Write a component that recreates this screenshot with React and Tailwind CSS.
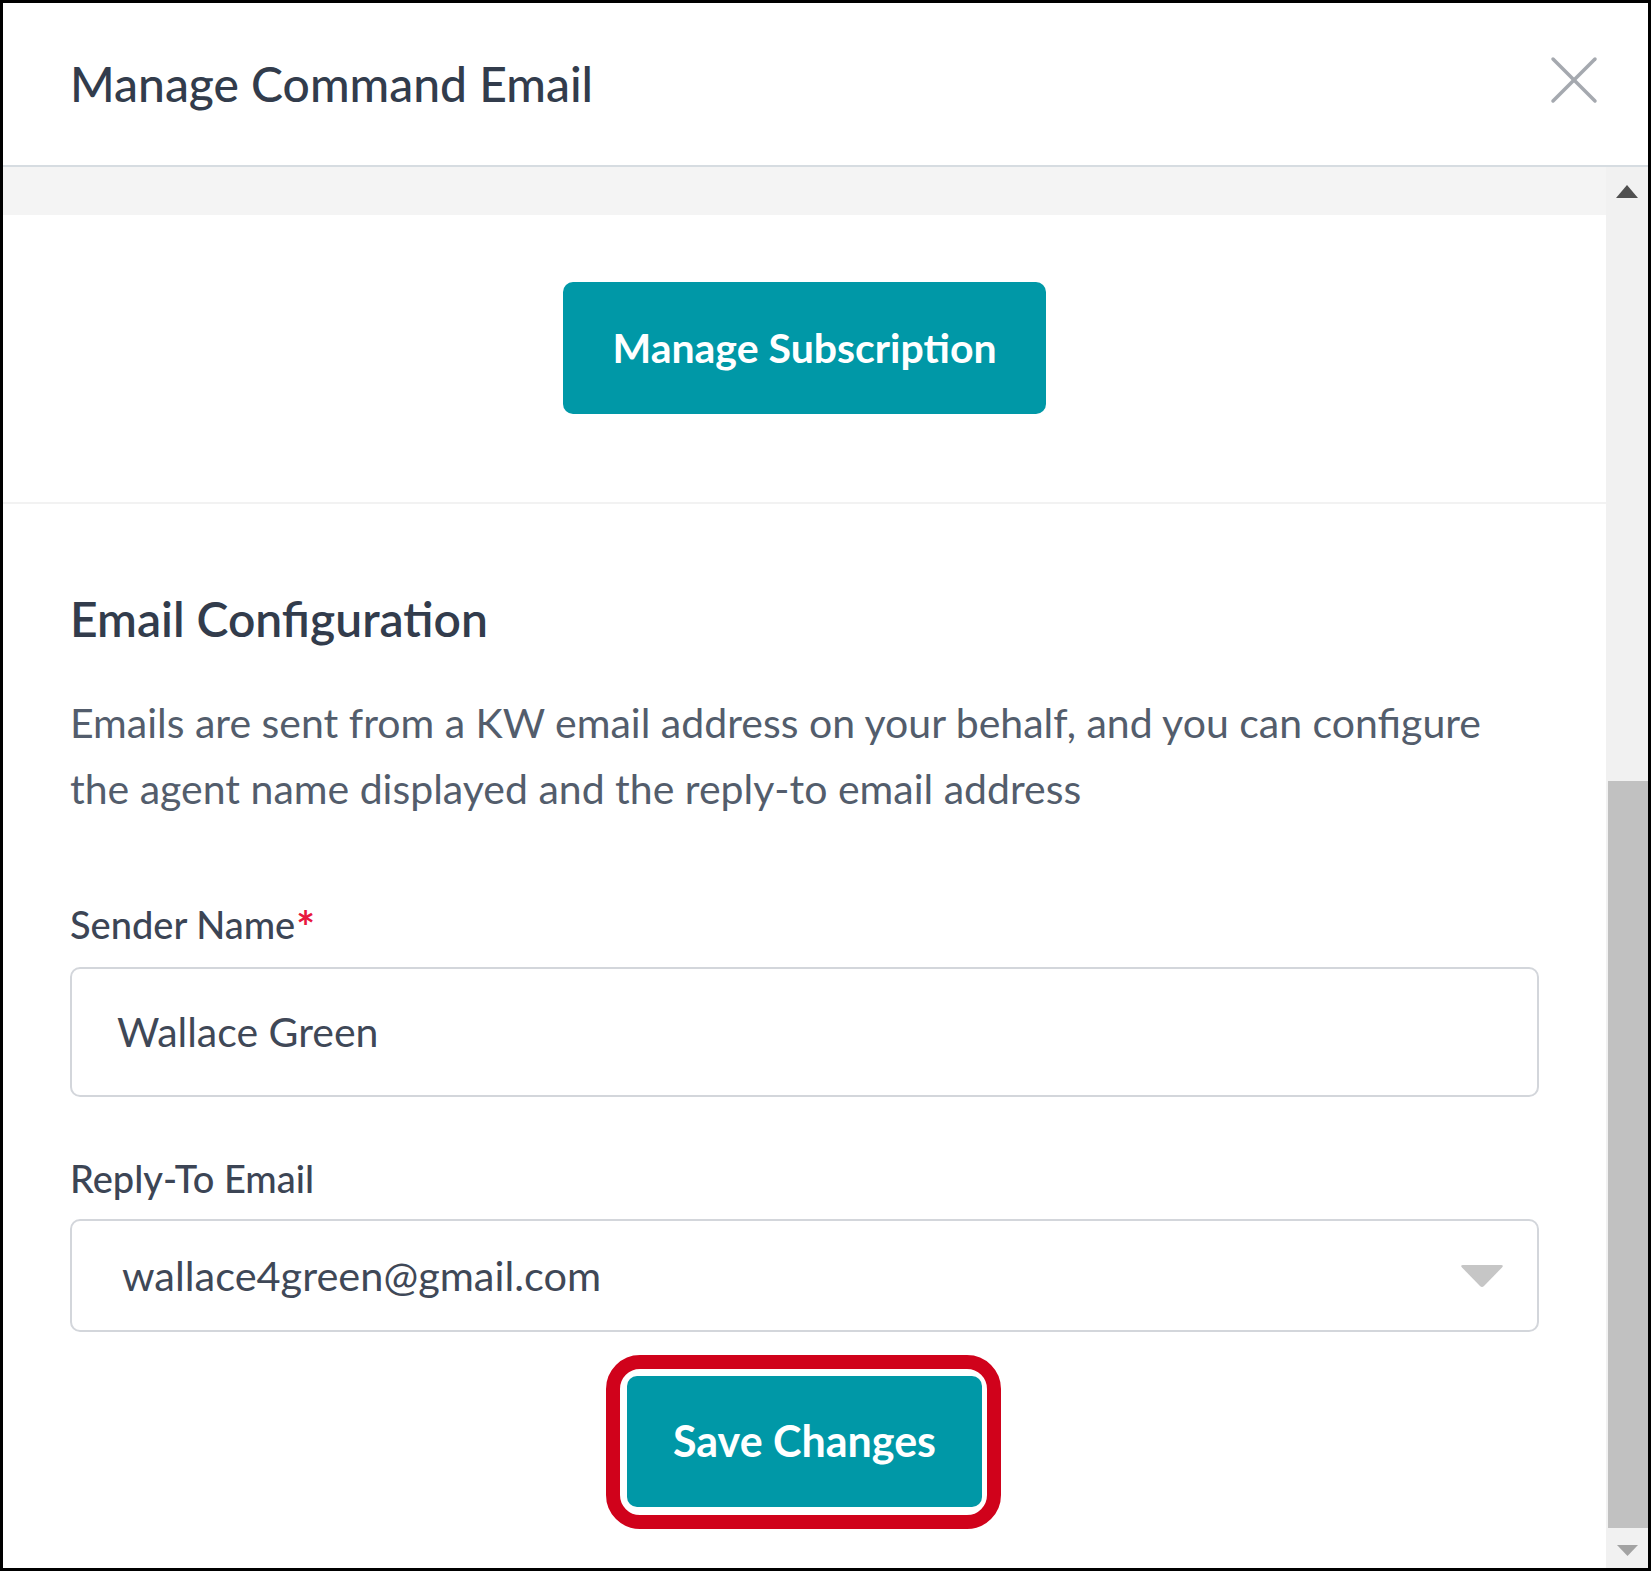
import React from "react";

function CloseIcon() {
  return (
    <svg width="48" height="48" viewBox="0 0 48 48" className="-mt-[8px]">
      <line x1="3" y1="3" x2="45" y2="45" stroke="#a5a9af" strokeWidth="3.5" strokeLinecap="round" />
      <line x1="45" y1="3" x2="3" y2="45" stroke="#a5a9af" strokeWidth="3.5" strokeLinecap="round" />
    </svg>
  );
}

function Scrollbar() {
  return (
    <div className="w-[42px] shrink-0 bg-[#f1f1f1] flex flex-col">
      <div className="h-[43px] flex items-start justify-center pt-[18px]">
        <svg width="22" height="13" viewBox="0 0 22 13">
          <path d="M11 0 L22 13 L0 13 Z" fill="#505050" />
        </svg>
      </div>
      <div className="h-[571px]" />
      <div className="h-[747px] ml-[2px] bg-[#c1c1c1]" />
      <div className="flex-1 flex items-start justify-center pt-[17px]">
        <svg width="21" height="11" viewBox="0 0 21 11">
          <path d="M0 0 L21 0 L10.5 11 Z" fill="#a3a3a3" />
        </svg>
      </div>
    </div>
  );
}

export default function App() {
  return (
    <div
      className="w-[1651px] h-[1571px] border-[3px] border-black bg-white flex flex-col overflow-hidden"
      style={{ fontFamily: "Lato, 'Noto Sans', sans-serif" }}
    >
      <header className="h-[164px] shrink-0 border-b-2 border-[#d6dce1] flex items-center justify-between pl-[67px] pr-[50px]">
        <h1 className="text-[48px] leading-[60px] font-medium text-[#323c4c]">Manage Command Email</h1>
        <CloseIcon />
      </header>
      <div className="flex flex-1 min-h-0">
        <div className="flex-1 min-w-0 flex flex-col overflow-hidden">
          <div className="h-[48px] shrink-0 bg-[#f4f4f4]" />
          <div className="flex justify-center pt-[67px] pb-[88px] border-b-2 border-[#f2f2f2]">
            <button className="w-[483px] h-[132px] rounded-[10px] bg-[#0098a7] text-white text-[41px] font-bold">
              Manage Subscription
            </button>
          </div>
          <div className="px-[67px] pt-[86px] flex flex-col">
            <h2 className="text-[48px] leading-[58px] font-semibold text-[#323c4c]">Email Configuration</h2>
            <p className="mt-[42px] mr-[50px] text-[41px] leading-[66px] text-[#535d6c]">
              Emails are sent from a KW email address on your behalf, and you can configure the agent name displayed and the reply-to email address
            </p>
            <label className="mt-[79px] text-[38px] leading-[46px] font-medium text-[#3c4555]">
              Sender Name
              <span className="relative top-[4px] ml-[1px] text-[44px] leading-[0] font-bold text-[#e8173f]">*</span>
            </label>
            <div className="mt-[20px] h-[130px] border-2 border-[#d3d6db] rounded-[10px] flex items-center pl-[45px] text-[41px] text-[#3f4857]">
              Wallace Green
            </div>
            <label className="mt-[58px] text-[38px] leading-[46px] font-medium text-[#3c4555]">Reply-To Email</label>
            <div className="mt-[18px] h-[113px] border-2 border-[#d3d6db] rounded-[10px] flex items-center justify-between pl-[50px] pr-[33px] text-[41.5px] text-[#3f4857]">
              <span>wallace4green@gmail.com</span>
              <svg width="44" height="24" viewBox="0 0 44 24">
                <path d="M3 1 L41 1 Q44 1 42 3.5 L24 22 Q22 24 20 22 L2 3.5 Q0 1 3 1 Z" fill="#c6c6c6" />
              </svg>
            </div>
            <div className="mt-[44px] flex justify-center">
              <div className="relative">
                <button className="w-[355px] h-[131px] rounded-[10px] bg-[#0098a7] text-white text-[43px] font-bold">
                  Save Changes
                </button>
                <div className="absolute -left-[21px] -right-[19px] -top-[21px] -bottom-[22px] border-[14px] border-[#d0021b] rounded-[34px] pointer-events-none" />
              </div>
            </div>
          </div>
        </div>
        <Scrollbar />
      </div>
    </div>
  );
}
